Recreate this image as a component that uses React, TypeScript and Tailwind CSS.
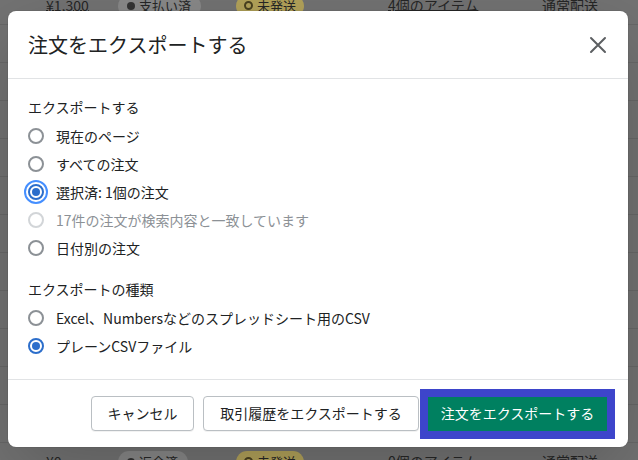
import { useState } from 'react';

// ─── Background table rows (dimmed behind the modal) ────────────────
interface OrderRow {
  price: string;
  payment: string;
  items: string;
  shipping: string;
}

const rows: OrderRow[] = [
  { price: '¥1,300', payment: '支払い済', items: '4個のアイテム', shipping: '通常配送' },
  { price: '¥2,000', payment: '支払い済', items: '2個のアイテム', shipping: '通常配送' },
  { price: '¥1,100', payment: '支払い済', items: '1個のアイテム', shipping: '通常配送' },
  { price: '¥3,300', payment: '支払い済', items: '3個のアイテム', shipping: '通常配送' },
  { price: '¥1,300', payment: '支払い済', items: '1個のアイテム', shipping: '通常配送' },
  { price: '¥2,600', payment: '支払い済', items: '2個のアイテム', shipping: '通常配送' },
  { price: '¥1,300', payment: '支払い済', items: '1個のアイテム', shipping: '通常配送' },
  { price: '¥4,000', payment: '支払い済', items: '4個のアイテム', shipping: '通常配送' },
  { price: '¥1,300', payment: '支払い済', items: '1個のアイテム', shipping: '通常配送' },
  { price: '¥2,200', payment: '支払い済', items: '2個のアイテム', shipping: '通常配送' },
  { price: '¥1,300', payment: '支払い済', items: '1個のアイテム', shipping: '通常配送' },
  { price: '¥5,200', payment: '支払い済', items: '4個のアイテム', shipping: '通常配送' },
  { price: '¥0', payment: '返金済', items: '0個のアイテム', shipping: '通常配送' },
];

function BackgroundTable() {
  return (
    <div className="-mt-[13px] bg-[#737373]">
      {rows.map((r, i) => (
        <div
          key={i}
          className="grid h-[38px] grid-cols-[46px_72px_118px_152px_154px_1fr] items-center whitespace-nowrap border-b border-[#686868] text-[14px] text-[#262626]"
        >
          <span />
          <span className="underline decoration-[#262626] underline-offset-[-1px]">{r.price}</span>
          <span className="flex h-[22px] w-fit items-center gap-[4px] rounded-full bg-[#898989] pl-[9px] pr-[10px] text-[13px]">
            <span className="h-[8px] w-[8px] shrink-0 rounded-full bg-[#333]" />
            {r.payment}
          </span>
          <span className="flex h-[22px] w-fit items-center gap-[4px] rounded-full bg-[#b3a35a] pl-[8px] pr-[8px] text-[13px]">
            <span className="h-[9px] w-[9px] shrink-0 rounded-full border-2 border-[#4a4120]" />
            未発送
          </span>
          <span className="underline decoration-[#262626] underline-offset-[-1px]">{r.items}</span>
          <span>{r.shipping}</span>
        </div>
      ))}
    </div>
  );
}

// ─── Radio option ───────────────────────────────────────────────────
function Radio({
  label,
  checked,
  focused,
  disabled,
  onSelect,
}: {
  label: string;
  checked?: boolean;
  focused?: boolean;
  disabled?: boolean;
  onSelect?: () => void;
}) {
  const ring = disabled
    ? 'border-[#d2d5d8]'
    : checked
      ? 'border-[#2c6ecb]'
      : 'border-[#8c9196]';
  return (
    <label
      className={`flex h-7 items-center gap-3 ${disabled ? 'cursor-default text-[#8c9196]' : 'cursor-pointer text-[#202223]'}`}
      onClick={disabled ? undefined : onSelect}
    >
      <span className="relative flex h-4 w-4 items-center justify-center">
        {focused && (
          <span className="absolute -inset-[4px] rounded-full border-2 border-[#458fff]" />
        )}
        <span className={`flex h-4 w-4 items-center justify-center rounded-full border-2 bg-white ${ring}`}>
          {checked && <span className="h-[8px] w-[8px] rounded-full bg-[#2c6ecb]" />}
        </span>
      </span>
      <span className="text-[14px] leading-5">{label}</span>
    </label>
  );
}

// ─── Component ──────────────────────────────────────────────────────
export default function App() {
  const [scope, setScope] = useState('selected');
  const [format, setFormat] = useState('plain');

  const scopes = [
    { id: 'page', label: '現在のページ' },
    { id: 'all', label: 'すべての注文' },
    { id: 'selected', label: '選択済: 1個の注文' },
    { id: 'search', label: '17件の注文が検索内容と一致しています', disabled: true },
    { id: 'date', label: '日付別の注文' },
  ];

  return (
    <div
      className="relative h-[460px] w-[638px] overflow-hidden bg-[#737373]"
      style={{ fontFamily: '"Noto Sans CJK JP", "Noto Sans", sans-serif' }}
    >
      <BackgroundTable />

      {/* Modal */}
      <div className="absolute left-[8px] top-[11px] w-[620px] rounded-[8px] bg-white shadow-[0_0_0_1px_rgba(0,0,0,0.05),0_26px_80px_rgba(0,0,0,0.2)]">
        <div className="flex h-[68px] items-center justify-between border-b border-[#e1e3e5] px-5">
          <h2 className="text-[20px] leading-7 text-[#202223]">注文をエクスポートする</h2>
          <button className="flex h-5 w-5 items-center justify-center text-[#5c5f62]" aria-label="閉じる">
            <svg width="18" height="18" viewBox="0 0 18 18" fill="none">
              <path d="M2 2L16 16M16 2L2 16" stroke="currentColor" strokeWidth="2" strokeLinecap="round" />
            </svg>
          </button>
        </div>

        <div className="h-[300px] px-5 pt-[18px]">
          <p className="mb-[5px] text-[14px] leading-5 text-[#202223]">エクスポートする</p>
          {scopes.map((s) => (
            <Radio
              key={s.id}
              label={s.label}
              checked={scope === s.id}
              focused={scope === s.id && s.id === 'selected'}
              disabled={s.disabled}
              onSelect={() => setScope(s.id)}
            />
          ))}

          <p className="mb-[5px] mt-[17px] text-[14px] leading-5 text-[#202223]">エクスポートの種類</p>
          <Radio
            label="Excel、Numbersなどのスプレッドシート用のCSV"
            checked={format === 'excel'}
            onSelect={() => setFormat('excel')}
          />
          <Radio label="プレーンCSVファイル" checked={format === 'plain'} onSelect={() => setFormat('plain')} />
        </div>

        <div className="flex h-[68px] items-center justify-end gap-[9px] border-t border-[#e1e3e5] px-[21px]">
          <button className="h-[35px] w-[103px] rounded-[4px] border border-[#babfc3] bg-white text-[14px] text-[#202223] shadow-[0_1px_0_rgba(0,0,0,0.05)]">
            キャンセル
          </button>
          <button className="h-[35px] w-[216px] rounded-[4px] border border-[#babfc3] bg-white text-[14px] text-[#202223] shadow-[0_1px_0_rgba(0,0,0,0.05)]">
            取引履歴をエクスポートする
          </button>
          <button className="h-[34px] w-[179px] bg-[#008060] text-[14px] text-white outline-[8px] outline-solid outline-[#3d45cb]">
            注文をエクスポートする
          </button>
        </div>
      </div>
    </div>
  );
}
